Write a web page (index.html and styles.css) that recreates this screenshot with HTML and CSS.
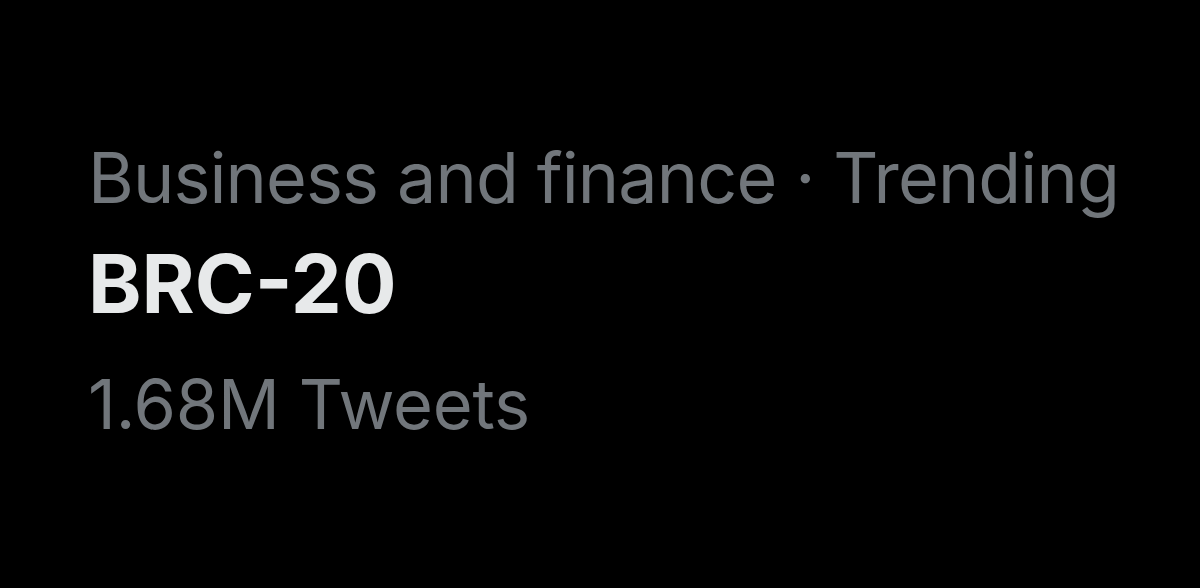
FILE: index.html
```html
<!DOCTYPE html>
<html>
<head>
<meta charset="utf-8">
<link rel="stylesheet" href="styles.css">
</head>
<body>
<div class="trend">
  <div class="meta">Business and finance · Trending</div>
  <div class="title">BRC-20</div>
  <div class="count">1.68M Tweets</div>
</div>
</body>
</html>
```
FILE: styles.css
```css
html, body {
  margin: 0;
  padding: 0;
  background: #000;
  width: 1200px;
  height: 588px;
  overflow: hidden;
}
.trend {
  padding: 136px 0 0 88px;
  font-family: Inter, "Noto Sans", sans-serif;
  display: flex;
  flex-direction: column;
  line-height: 1.2;
}
.meta {
  color: #71767b;
  font-size: 70px;
  letter-spacing: -0.87px;
}
.title {
  color: #e7e9ea;
  font-size: 81px;
  font-weight: 700;
  margin-top: 16px;
}
.count {
  color: #71767b;
  font-size: 68.5px;
  letter-spacing: -0.2px;
  margin-top: 31px;
}
```
